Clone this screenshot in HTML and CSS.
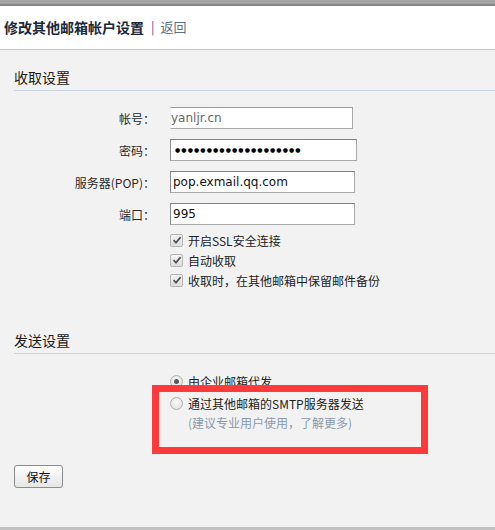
FILE: index.html
```html
<!DOCTYPE html>
<html lang="zh">
<head>
<meta charset="utf-8">
<title>修改其他邮箱帐户设置</title>
<link rel="stylesheet" href="styles.css">
</head>
<body>
<div class="topbar"></div>
<div class="header">
  <span class="title">修改其他邮箱帐户设置</span>
  <span class="sep">|</span>
  <a class="back">返回</a>
</div>
<div class="main">
  <div class="section">
    <div class="sec-title">收取设置</div>
    <div class="form">
      <div class="row"><label class="lbl">帐号：</label><div class="field"><div class="inp inp-ro">yanljr.cn</div></div></div>
      <div class="row"><label class="lbl">密码：</label><div class="field"><div class="inp inp-pw">●●●●●●●●●●●●●●●●●●●●</div></div></div>
      <div class="row"><label class="lbl">服务器(POP)：</label><div class="field"><div class="inp">pop.exmail.qq.com</div></div></div>
      <div class="row"><label class="lbl">端口：</label><div class="field"><div class="inp">995</div></div></div>
    </div>
    <div class="checks">
      <div class="chk"><span class="box"><svg width="10" height="10" viewBox="0 0 10 10"><path d="M1.5 5.2 L4 7.6 L8.6 2.2" fill="none" stroke="#555" stroke-width="1.8"/></svg></span>开启SSL安全连接</div>
      <div class="chk"><span class="box"><svg width="10" height="10" viewBox="0 0 10 10"><path d="M1.5 5.2 L4 7.6 L8.6 2.2" fill="none" stroke="#555" stroke-width="1.8"/></svg></span>自动收取</div>
      <div class="chk"><span class="box"><svg width="10" height="10" viewBox="0 0 10 10"><path d="M1.5 5.2 L4 7.6 L8.6 2.2" fill="none" stroke="#555" stroke-width="1.8"/></svg></span>收取时，在其他邮箱中保留邮件备份</div>
    </div>
  </div>
  <div class="section section-send">
    <div class="sec-title">发送设置</div>
    <div class="radios">
      <div class="rad"><span class="circle on"></span>由企业邮箱代发</div>
      <div class="rad"><span class="circle"></span>通过其他邮箱的SMTP服务器发送</div>
      <div class="hint">(建议专业用户使用，了解更多)</div>
    </div>
    <div class="mark"></div>
  </div>
  <div class="actions"><button class="btn">保存</button></div>
</div>
<div class="bottombar"></div>
</body>
</html>
```

FILE: styles.css
```css
html, body {
  margin: 0;
  padding: 0;
}
body {
  width: 495px;
  height: 530px;
  background: #f2f2f2;
  font-family: "Noto Sans CJK SC", "Noto Sans", sans-serif;
  font-size: 12px;
  color: #222;
  position: relative;
  overflow: hidden;
}
.topbar {
  height: 4px;
  background: #a3a3a3;
  border-bottom: 2px solid #858585;
}
.header {
  height: 44px;
  background: #fff;
  border-bottom: 1px solid #c6c6c6;
  display: flex;
  align-items: center;
  padding-left: 4px;
  box-sizing: border-box;
  padding-bottom: 2px;
}
.title {
  font-size: 14px;
  font-weight: bold;
  color: #1b2838;
}
.sep {
  color: #6a4f8a;
  margin: 0 6px 0 7px;
  font-size: 13px;
}
.back {
  color: #5a6f86;
  font-size: 13px;
}
.main {
  padding-top: 17px;
}
.section {
  position: relative;
  padding-left: 14px;
}
.sec-title {
  font-size: 14px;
  line-height: 20px;
  padding-bottom: 3px;
  border-bottom: 1px solid #c9d5e2;
  color: #1a1a1a;
}
.form {
  padding-top: 16px;
  display: flex;
  flex-direction: column;
  gap: 10px;
}
.row {
  display: flex;
  align-items: center;
  height: 22px;
}
.lbl {
  width: 141px;
  text-align: right;
  color: #2a2a2a;
  font-size: 12px;
}
.field {
  margin-left: 15px;
}
.inp {
  width: 181px;
  height: 20px;
  border: 1px solid #a9a9a9;
  border-top-color: #7f7f7f;
  border-left-color: #8a8a8a;
  background: #fff;
  font-family: "DejaVu Sans", sans-serif;
  font-size: 12px;
  line-height: 20px;
  padding-left: 2px;
  color: #111;
  box-sizing: content-box;
}
.inp-ro {
  color: #666;
  border-left-color: #eeeeee;
  border-top-color: #9a9a9a;
  padding-left: 0;
}
.inp-pw {
  font-size: 6px;
  letter-spacing: 1.1px;
  padding-left: 4px;
  color: #000;
}
.checks {
  padding-top: 5px;
  padding-left: 156px;
  display: flex;
  flex-direction: column;
}
.chk {
  height: 20px;
  display: flex;
  align-items: center;
  gap: 5px;
  font-size: 12px;
  color: #222;
}
.box {
  width: 11px;
  height: 11px;
  border: 1px solid #b4b4b4;
  border-radius: 2px;
  background: linear-gradient(#f4f4f4, #dedede);
  display: flex;
  align-items: center;
  justify-content: center;
}
.section-send {
  margin-top: 40px;
}
.radios {
  padding-top: 16px;
  padding-left: 156px;
  display: flex;
  flex-direction: column;
}
.rad {
  height: 22px;
  display: flex;
  align-items: center;
  gap: 5px;
  color: #222;
}
.circle {
  width: 11px;
  height: 11px;
  border: 1px solid #b0b0b0;
  border-radius: 50%;
  background: radial-gradient(circle at 50% 40%, #fafafa, #dcdcdc);
  display: flex;
  align-items: center;
  justify-content: center;
}
.circle.on::after {
  content: "";
  width: 5px;
  height: 5px;
  border-radius: 50%;
  background: #5a5a5a;
}
.hint {
  padding-left: 18px;
  color: #8a9aae;
  line-height: 18px;
}
.mark {
  position: absolute;
  left: 152px;
  top: 55px;
  width: 276px;
  height: 69px;
  border: 7px solid #ff3a3a;
  box-sizing: border-box;
}
.actions {
  padding: 33px 0 0 14px;
}
.btn {
  width: 49px;
  height: 23px;
  border: 1px solid #8c8c8c;
  border-radius: 3px;
  background: linear-gradient(#ffffff, #e6e6e6);
  font-family: "Noto Sans CJK SC", sans-serif;
  font-size: 12px;
  color: #111;
  padding: 0;
}
.bottombar {
  position: absolute;
  left: 0;
  bottom: 0;
  width: 100%;
  height: 3px;
  background: #c2c2c2;
}
```
